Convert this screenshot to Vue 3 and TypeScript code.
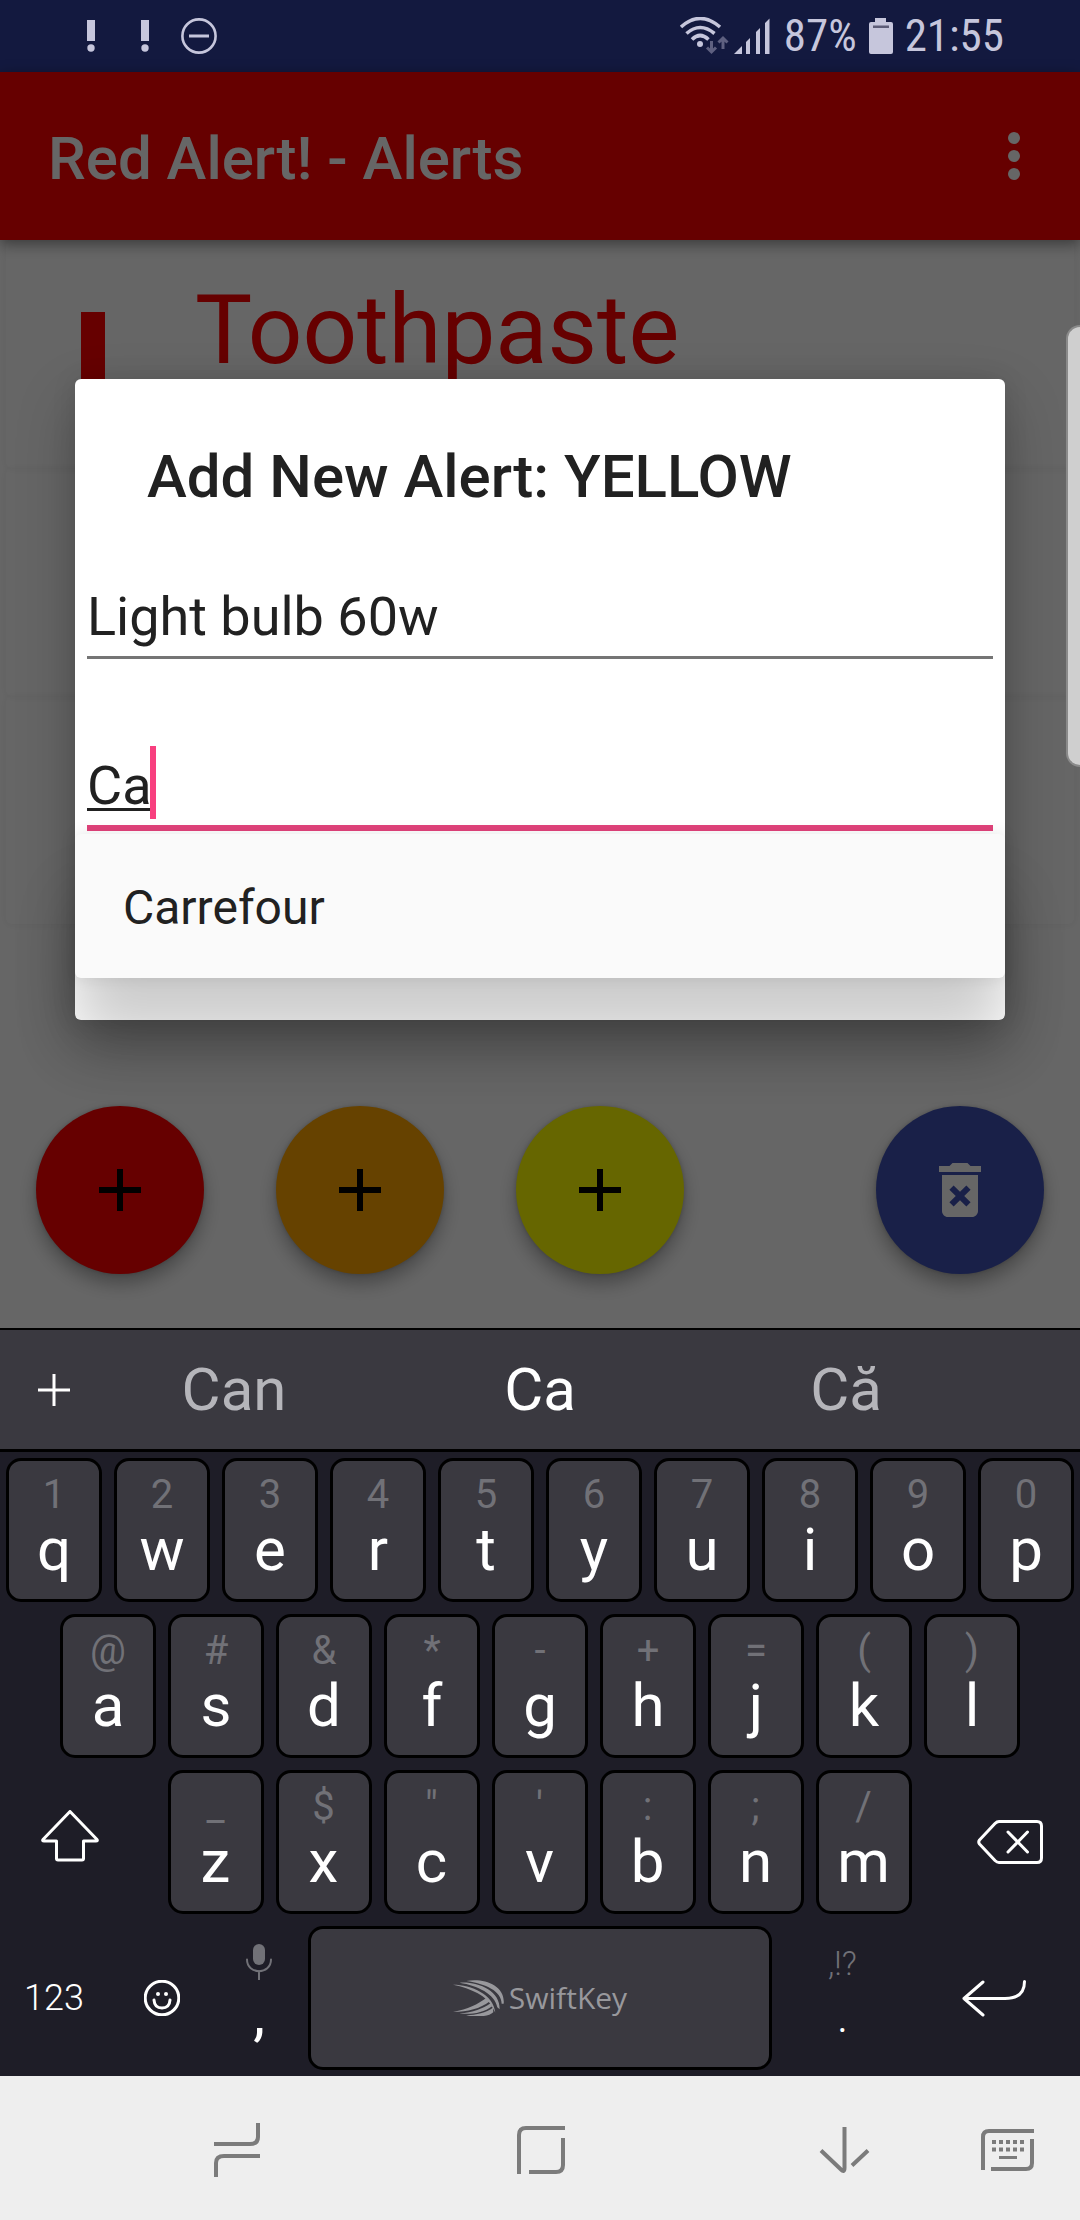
<script setup lang="ts">
import { ref } from 'vue'

interface Key {
  main: string
  hint: string
}

const pair = (letters: string, hints: string): Key[] =>
  [...letters].map((main, i) => ({ main, hint: hints[i] }))

const topRow = pair('qwertyuiop', '1234567890')
const homeRow = pair('asdfghjkl', '@#&*-+=()')
const bottomRow = pair('zxcvbnm', '_$"\':;/')

const suggestions = ['Can', 'Ca', 'Că']
const typed = 'Ca'

const alertName = ref('Light bulb 60w')
const shopName = ref(typed)

const addButtons = [
  { level: 'red', label: 'Add red alert' },
  { level: 'orange', label: 'Add orange alert' },
  { level: 'yellow', label: 'Add yellow alert' },
]
</script>

<template>
  <div class="screen">
    <header class="status">
      <div class="status-left">
        <svg v-for="n in 2" :key="n" class="bang" viewBox="0 0 8 33" aria-hidden="true">
          <rect width="8" height="21" />
          <circle cx="4" cy="28" r="3.7" />
        </svg>
        <svg class="dnd" viewBox="0 0 36 36" aria-hidden="true">
          <circle cx="18" cy="18" r="16.6" fill="none" stroke="currentColor" stroke-width="2.6" />
          <rect x="8" y="16.5" width="20" height="3" />
        </svg>
      </div>
      <div class="status-right">
        <svg class="wifi" viewBox="0 0 50 38" aria-hidden="true">
          <g fill="none" stroke="currentColor" stroke-width="3.6">
            <path d="M2 10Q21-7 41 10" />
            <path d="M7.500 16.500Q21 4.500 35.500 16.500" />
            <path d="M13 22.500Q21 14.500 29.500 22.500" />
          </g>
          <circle cx="21" cy="27" r="3" />
          <path class="arrows" d="M32.500 24v11M28 30.500l4.500 4.500 4.500-4.500M44 32V21M39.500 25.500L44 21l4.500 4.500" />
        </svg>
        <svg class="signal" viewBox="0 0 36 36" aria-hidden="true">
          <path d="M0 36L8 28V36ZM12 24l4-4V36H12ZM22 14l4-4V36H22ZM31 5l4.500-4.500V36H31Z" />
        </svg>
        <span class="percent">87%</span>
        <svg class="battery" viewBox="0 0 24 36" aria-hidden="true">
          <path d="M6 0H17V4H22Q24 4 24 6V34Q24 36 22 36H2Q0 36 0 34V6Q0 4 2 4H6Z" />
          <rect x="4" y="7.500" width="16" height="2.500" fill="#5d5d78" />
        </svg>
        <time class="clock">21:55</time>
      </div>
    </header>

    <main class="app">
      <div class="appbar">
        <h1>Red Alert! - Alerts</h1>
        <button class="more" type="button" aria-label="More options">
          <svg viewBox="0 0 72 72"><circle cx="36" cy="18" r="6" /><circle cx="36" cy="36" r="6" /><circle cx="36" cy="54" r="6" /></svg>
        </button>
      </div>

      <ul class="alerts">
        <li class="alert">
          <svg class="alert-mark" viewBox="0 0 24 110" aria-hidden="true">
            <rect width="24" height="76" />
            <circle cx="12" cy="96" r="12" />
          </svg>
          <span>Toothpaste</span>
        </li>
        <li class="alert"></li>
        <li class="alert"></li>
      </ul>

      <div class="fabs">
        <button v-for="b in addButtons" :key="b.level" class="fab" :class="b.level" type="button" :aria-label="b.label">
          <svg viewBox="0 0 24 24"><path d="M19 13h-6v6h-2v-6H5v-2h6V5h2v6h6v2z" /></svg>
        </button>
        <button class="fab delete" type="button" aria-label="Delete alerts">
          <svg viewBox="0 0 24 24">
            <path d="M6 19c0 1.1.9 2 2 2h8c1.1 0 2-.9 2-2V7H6v12zm2.460-7.120l1.410-1.410L12 12.590l2.120-2.120 1.410 1.410L13.410 14l2.120 2.120-1.410 1.410L12 15.410l-2.120 2.120-1.410-1.410L10.590 14l-2.130-2.120zM15.500 4l-1-1h-5l-1 1H5v2h14V4z" />
          </svg>
        </button>
      </div>

      <div class="scrim">
        <section class="dialog" role="dialog" aria-labelledby="dialog-title">
          <h2 id="dialog-title">Add New Alert: YELLOW</h2>
          <form class="fields" @submit.prevent>
            <input v-model="alertName" class="field" type="text" aria-label="Alert name" spellcheck="false">
            <div class="shop">
              <input v-model="shopName" class="field active" type="text" aria-label="Shop" spellcheck="false">
              <i class="cursor"></i>
              <ul class="dropdown">
                <li><button type="button" @click="shopName = 'Carrefour'">Carrefour</button></li>
              </ul>
            </div>
          </form>
        </section>
      </div>
      <i class="edge-handle"></i>
    </main>

    <section class="keyboard">
      <div class="suggestions">
        <button class="expand" type="button" aria-label="Open toolbar">
          <svg viewBox="0 0 32 32"><path d="M16 0V32M0 16H32" /></svg>
        </button>
        <button v-for="s in suggestions" :key="s" class="suggestion" :class="{ current: s === typed }" type="button">{{ s }}</button>
      </div>

      <div class="keys">
        <div class="row">
          <div v-for="k in topRow" :key="k.main" class="cell">
            <button class="key" type="button"><small>{{ k.hint }}</small><span>{{ k.main }}</span></button>
          </div>
        </div>
        <div class="row">
          <div v-for="k in homeRow" :key="k.main" class="cell">
            <button class="key" type="button"><small>{{ k.hint }}</small><span>{{ k.main }}</span></button>
          </div>
        </div>
        <div class="row">
          <button class="bare side shift" type="button" aria-label="Shift">
            <svg viewBox="0 0 58 64"><path d="M29 1.500L56 29.500Q57 31 55 31H42.500V48.500Q42.500 50 41 50H17Q15.500 50 15.500 48.500V31H3Q1 31 2 29.500Z" /></svg>
          </button>
          <div v-for="k in bottomRow" :key="k.main" class="cell">
            <button class="key" type="button"><small>{{ k.hint }}</small><span>{{ k.main }}</span></button>
          </div>
          <button class="bare side backspace" type="button" aria-label="Backspace">
            <svg viewBox="0 0 66 44"><path d="M22 1.500H60Q64.500 1.500 64.500 6V38Q64.500 42.500 60 42.500H22Q20 42.500 18 40.500L2.500 24Q1 22 2.500 20L18 3.500Q20 1.500 22 1.500ZM31 12L50.500 32M50.500 12L31 32" /></svg>
          </button>
        </div>
        <div class="row">
          <button class="bare narrow numeric" type="button">123</button>
          <button class="bare narrow emoji" type="button" aria-label="Emoji">
            <svg viewBox="0 0 36 36">
              <circle cx="18" cy="18" r="16.800" /><path d="M10 20Q10.500 28 18 28Q25.500 28 26 20" />
              <circle class="eye" cx="14" cy="14" r="2" /><circle class="eye" cx="22" cy="14" r="2" />
            </svg>
          </button>
          <button class="bare stacked comma" type="button" aria-label="Comma, hold for voice input">
            <svg viewBox="0 0 26 36"><rect x="7" y="0" width="12" height="21" rx="6" /><path d="M1 15.500C1 31 25 31 25 15.500M13 27V36" /></svg>
            <span>,</span>
          </button>
          <div class="cell space">
            <button class="key brand" type="button">
              <svg viewBox="35 43 152 109" aria-hidden="true">
                <path d="M75 46C125 36 192 58 186 114L180 114C180 76 132 54 75 46Z" />
                <path d="M55 51C108 47 176 74 174 130L167 124C160 84 108 60 55 51Z" />
                <path d="M35 57C90 57 156 86 161 140L152 124C138 92 90 68 35 57Z" />
                <path d="M35 138C80 130 108 116 136 95L144 107C116 128 80 138 35 138Z" />
                <path d="M54 143C95 139 124 128 147 112L152 121C126 140 94 146 54 143Z" />
                <path d="M74 148C105 148 134 140 154 126L155 139C142 152 105 155 74 148Z" />
              </svg>
              <span>SwiftKey</span>
            </button>
          </div>
          <button class="bare stacked period" type="button"><small>,!?</small><span>.</span></button>
          <button class="bare enter" type="button" aria-label="Enter">
            <svg viewBox="0 0 64 37"><path d="M21 2L2 18.500L21 35M2 18.500H43Q62.500 18.500 62.500 1.500" /></svg>
          </button>
        </div>
      </div>
    </section>

    <nav class="navbar">
      <div class="nav-main">
        <button type="button" aria-label="Recent apps">
          <svg class="recents" viewBox="0 0 46 54"><path d="M0 21H36Q44 21 44 14V0M46 33H10Q2 33 2 40V54" /></svg>
        </button>
        <button type="button" aria-label="Home">
          <svg class="home" viewBox="0 0 48 48"><path d="M2 48V9Q2 2 9 2H48M46 12V39Q46 46 39 46H12" /></svg>
        </button>
        <button type="button" aria-label="Hide keyboard">
          <svg class="down" viewBox="0 0 51 46"><path d="M25.500 0V41Q25.500 46 22 42.500L2 23.500M49 23.500L33 38.500" /></svg>
        </button>
      </div>
      <button type="button" aria-label="Change keyboard">
        <svg class="board" viewBox="0 0 53 42">
          <path d="M2 41V8Q2 2 8 2H53M51 10V34Q51 40 45 40H10" />
          <path class="dots" d="M11 13H43M11 20.500H43" />
          <path class="bar" d="M18 28.500H36" />
        </svg>
      </button>
    </nav>
  </div>
</template>

<style>
body {
  margin: 0;
}
</style>

<style scoped>
.screen {
  display: flex;
  flex-direction: column;
  min-height: 100vh;
  font-family: Roboto, "Liberation Sans", sans-serif;
}

button {
  padding: 0;
  border: 0;
  background: none;
  color: inherit;
  font: inherit;
}

svg {
  display: block;
  fill: currentColor;
}

ul {
  margin: 0;
  padding: 0;
  list-style: none;
}

/* status bar */
.status {
  display: flex;
  justify-content: space-between;
  align-items: center;
  height: 72px;
  padding: 0 76px 0 87px;
  box-sizing: border-box;
  background: #13193f;
  color: #c6c6dc;
}

.status-left,
.status-right {
  display: flex;
  align-items: center;
}

.bang {
  width: 8px;
  height: 33px;
  margin-right: 46px;
}

.dnd {
  width: 36px;
  margin-left: -14px;
}

.wifi {
  width: 50px;
  height: 38px;
}

.arrows {
  fill: none;
  stroke: #5e6080;
  stroke-width: 3;
}

.signal {
  width: 36px;
  height: 36px;
  margin: 0 14px 0 5px;
}

.percent,
.clock {
  font-family: "Roboto Condensed", "Liberation Sans Narrow", Roboto, sans-serif;
  font-size: 45px;
  line-height: 72px;
}

.battery {
  width: 24px;
  height: 36px;
  margin: 0 12px;
}

/* app behind the dialog */
.app {
  position: relative;
  flex: 1;
  display: flex;
  flex-direction: column;
  background: #fff;
}

.appbar {
  display: flex;
  align-items: center;
  justify-content: space-between;
  height: 168px;
  padding: 0 30px 0 48px;
  background: #f00;
  color: #fff;
  box-shadow: 0 4px 14px rgba(0, 0, 0, 0.45);
  z-index: 1;
}

h1,
h2 {
  margin: 0;
  font-size: 60px;
  font-weight: 500;
  line-height: 72px;
}

h1 {
  padding-top: 6px;
}

.more svg {
  width: 72px;
}

.alerts {
  flex: 1;
}

.alert {
  display: flex;
  align-items: flex-start;
  height: 228px;
  margin: 0 6px;
  padding: 34px 0 0 75px;
  box-sizing: border-box;
  border-radius: 6px;
  color: #f00;
  font-size: 96px;
  line-height: 112px;
  box-shadow: 0 1px 8px rgba(0, 0, 0, 0.06);
}

.alert-mark {
  width: 24px;
  margin: 38px 90px 0 0;
}

.fabs {
  display: flex;
  gap: 72px;
  padding: 0 36px 54px;
}

.fab {
  display: grid;
  place-items: center;
  width: 168px;
  height: 168px;
  border-radius: 50%;
  color: #000;
  box-shadow: 0 10px 18px rgba(0, 0, 0, 0.3), 0 0 4px rgba(0, 0, 0, 0.2);
}

.fab svg {
  width: 72px;
}

.red {
  background: #f00;
}

.orange {
  background: #ffa500;
}

.yellow {
  background: #ff0;
}

.delete {
  margin-left: auto;
  background: #3f51b5;
  color: #fff;
}

/* dialog */
.scrim {
  position: absolute;
  inset: 0;
  z-index: 2;
  display: flex;
  flex-direction: column;
  justify-content: center;
  padding: 0 75px 2px;
  background: rgba(0, 0, 0, 0.6);
}

.dialog {
  padding: 62px 12px 189px;
  border-radius: 6px;
  background: #fff;
  color: #212121;
  box-shadow: 0 24px 60px rgba(0, 0, 0, 0.24), 0 0 24px rgba(0, 0, 0, 0.1);
}

h2 {
  padding-left: 60px;
}

.fields {
  display: flex;
  flex-direction: column;
  gap: 95px;
  margin-top: 72px;
}

.field {
  display: block;
  box-sizing: border-box;
  width: 100%;
  height: 74px;
  padding: 0 0 7px;
  border: 0;
  border-bottom: 3px solid #757575;
  outline: 0;
  background: none;
  color: inherit;
  font: 54px/64px Roboto, "Liberation Sans", sans-serif;
}

.active {
  height: 77px;
  border-bottom: 6px solid #e0427a;
  text-decoration: underline;
  text-decoration-thickness: 3px;
  text-decoration-skip-ink: none;
  text-underline-offset: 4px;
}

.shop {
  position: relative;
}

.cursor {
  position: absolute;
  top: -8px;
  left: 63px;
  width: 6px;
  height: 73px;
  background: #f8407f;
}

.dropdown {
  position: absolute;
  top: 80px;
  left: -12px;
  right: -12px;
  border-radius: 6px;
  background: #fafafa;
  box-shadow: 0 60px 60px rgba(0, 0, 0, 0.2), 0 0 16px rgba(0, 0, 0, 0.1);
}

.dropdown button {
  width: 100%;
  padding: 4px 0 0 48px;
  text-align: left;
  font-size: 48px;
  line-height: 140px;
}

.edge-handle {
  position: absolute;
  z-index: 3;
  top: 253px;
  right: 0;
  width: 12px;
  height: 438px;
  border: 2px solid #8a8a8a;
  border-right: 0;
  border-radius: 16px 0 0 16px;
  background: #cfcfcf;
}

/* keyboard */
.keyboard {
  background: #1e1d27;
  color: #fff;
}

.suggestions {
  display: flex;
  align-items: center;
  height: 119px;
  padding: 0 81px 0 0;
  border-top: 2px solid #000;
  border-bottom: 3px solid #000;
  background: #3a3940;
}

.expand {
  width: 81px;
  padding-left: 38px;
  box-sizing: border-box;
}

.expand svg {
  width: 32px;
  stroke: currentColor;
  stroke-width: 3;
}

.suggestion {
  flex: 1;
  color: #b5b5ba;
  font-size: 60px;
  line-height: 72px;
}

.current {
  color: #fff;
}

.row {
  display: flex;
  justify-content: center;
  height: 156px;
}

.cell {
  flex: 0 0 10%;
  box-sizing: border-box;
  padding: 6px;
}

.key {
  display: flex;
  flex-direction: column;
  align-items: center;
  gap: 5px;
  width: 100%;
  height: 100%;
  padding-top: 14px;
  box-sizing: border-box;
  border: 3px solid #000;
  border-radius: 15px;
  background: #3a3940;
}

.key small,
.period small {
  color: #717177;
  font-size: 40px;
  line-height: 40px;
}

.key span,
.stacked span {
  font-size: 60px;
  line-height: 60px;
}

.bare {
  display: flex;
  align-items: center;
  justify-content: center;
}

.bare svg {
  fill: none;
  stroke: currentColor;
  stroke-width: 3;
  stroke-linecap: round;
  stroke-linejoin: round;
}

.side {
  flex: 1;
  box-sizing: border-box;
}

.shift {
  padding-right: 22px;
}

.shift svg {
  width: 58px;
}

.backspace {
  padding-left: 23px;
}

.backspace svg {
  width: 66px;
}

.narrow {
  flex: 0 0 10%;
}

.numeric {
  font-size: 36px;
  font-weight: 300;
}

.emoji svg {
  width: 36px;
}

.emoji .eye {
  fill: currentColor;
  stroke: none;
}

.stacked {
  flex-direction: column;
  justify-content: flex-start;
  box-sizing: border-box;
  padding-top: 24px;
}

.comma {
  flex: 0 0 8%;
  gap: 4px;
}

.comma svg {
  width: 26px;
  color: #717177;
}

.comma rect {
  fill: currentColor;
  stroke: none;
}

.comma path {
  stroke-width: 2;
}

.space {
  flex: 0 0 44%;
}

.key.brand {
  flex-direction: row;
  justify-content: center;
  padding-top: 0;
  color: #98989c;
}

.brand svg {
  width: 51px;
}

.key.brand span {
  font-family: "Open Sans", "Noto Sans", sans-serif;
  font-size: 30px;
  line-height: 44px;
}

.period {
  flex: 0 0 12%;
  gap: 6px;
}

.period small {
  font-size: 33px;
  font-weight: 300;
}

.period span {
  font-size: 36px;
}

.enter {
  flex: 1;
}

.enter svg {
  width: 64px;
}

/* system navigation */
.navbar {
  display: flex;
  align-items: center;
  gap: 43px;
  height: 144px;
  padding: 4px 13px 0 177px;
  box-sizing: border-box;
  background: #eee;
  color: #7b7b7b;
}

.nav-main {
  flex: 1;
  display: flex;
  justify-content: space-between;
  height: 100%;
}

.navbar button {
  display: grid;
  place-items: center;
  width: 120px;
  height: 100%;
}

.navbar svg {
  fill: none;
  stroke: currentColor;
  stroke-width: 4;
}

.recents {
  width: 46px;
}

.home {
  width: 48px;
}

.down {
  width: 51px;
}

.board {
  width: 53px;
}

.board .dots {
  stroke-dasharray: 4 3;
}

.board .bar {
  stroke-width: 3;
}
</style>
